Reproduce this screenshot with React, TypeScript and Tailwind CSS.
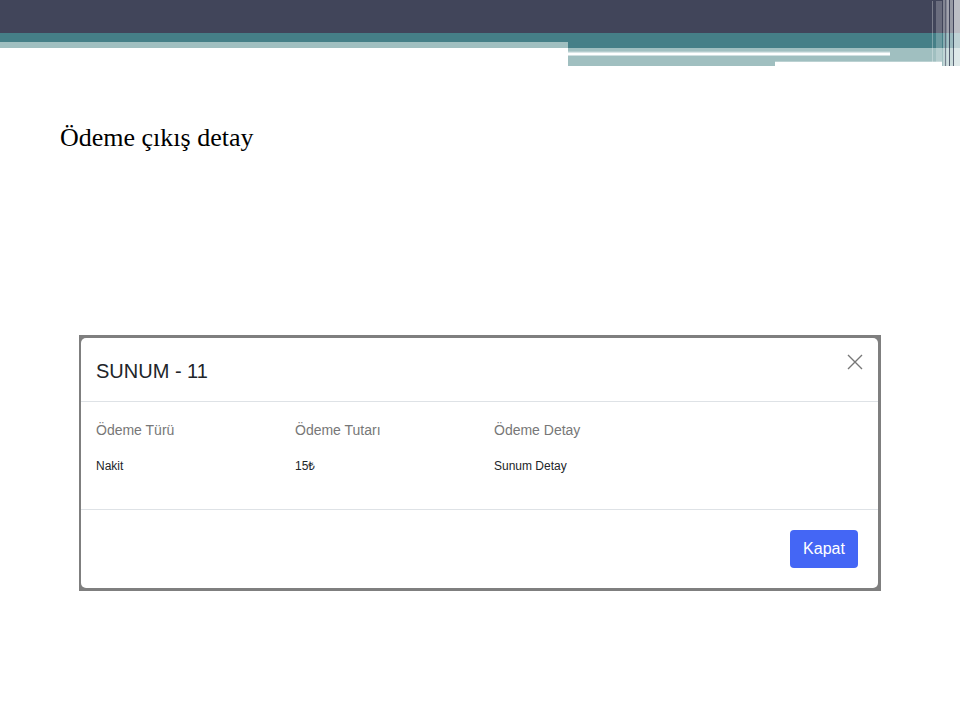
const HeaderArt = () => (
  <svg width="960" height="66" viewBox="0 0 960 66" className="block">
    <rect x="0" y="0" width="960" height="33" fill="#41455a" />
    <rect x="0" y="33" width="960" height="15" fill="#457f87" />
    <rect x="0" y="42" width="568" height="6" fill="#a0bfc0" />
    <rect x="568" y="48" width="392" height="18" fill="#a0bfc0" />
    <rect x="568" y="51.5" width="322" height="1" fill="#c8dadb" />
    <rect x="568" y="52.5" width="322" height="3" fill="#ffffff" />
    <rect x="775" y="61.5" width="167" height="1" fill="#d6e3e3" />
    <rect x="775" y="62" width="167" height="4" fill="#ffffff" />
    {/* vertical stripes */}
    <rect x="932" y="1" width="1" height="61" fill="#ffffff" opacity="0.3" />
    <rect x="936" y="1" width="6" height="65" fill="#ffffff" opacity="0.22" />
    <rect x="943" y="0" width="4" height="66" fill="#ffffff" opacity="0.35" />
    <rect x="945" y="0" width="1" height="66" fill="#41455a" opacity="0.6" />
    <rect x="947" y="0" width="2" height="66" fill="#ffffff" opacity="0.5" />
    <rect x="949" y="0" width="1" height="66" fill="#41455a" opacity="0.8" />
    <rect x="950" y="0" width="3" height="66" fill="#ffffff" opacity="0.45" />
    <rect x="953" y="0" width="1" height="66" fill="#41455a" opacity="0.7" />
    <rect x="954" y="0" width="6" height="66" fill="#ffffff" opacity="0.65" />
  </svg>
);

const CloseIcon = () => (
  <svg width="16" height="16" viewBox="0 0 16 16" className="-mt-[2px]">
    <path d="M1 1L15 15M15 1L1 15" stroke="#777777" strokeWidth="1.4" fill="none" />
  </svg>
);

const App = () => {
  return (
    <div className="w-[960px] h-[720px] bg-white overflow-hidden">
      <HeaderArt />

      <h1 className="mt-[54px] ml-[60px] text-[26px] leading-[36px] text-black font-['Liberation_Serif',serif]">
        Ödeme çıkış detay
      </h1>

      {/* MODAL */}
      <div className="mt-[179px] ml-[79px] w-[802px] bg-[#7f7f7f] pt-[3px] pl-[2px] pr-[3px] pb-[3px] font-['Liberation_Sans',Arial,sans-serif]">
        <div className="bg-white rounded-[5px]">
          <div className="flex items-start justify-between px-[15px] pt-[18px] pb-[15px] border-b border-[#dee2e6]">
            <h2 className="text-[20px] leading-[30px] text-[#212529]">SUNUM - 11</h2>
            <CloseIcon />
          </div>

          <div className="px-[15px] pt-[18px] pb-[34px] border-b border-[#dee2e6]">
            <div className="grid grid-cols-[199px_199px_1fr]">
              <p className="text-[14px] leading-[21px] text-[#777777]">Ödeme Türü</p>
              <p className="text-[14px] leading-[21px] text-[#777777]">Ödeme Tutarı</p>
              <p className="text-[14px] leading-[21px] text-[#777777]">Ödeme Detay</p>
            </div>
            <div className="grid grid-cols-[199px_199px_1fr] mt-[16px]">
              <p className="text-[12px] leading-[18px] text-[#212529]">Nakit</p>
              <p className="text-[12px] leading-[18px] text-[#212529]">15₺</p>
              <p className="text-[12px] leading-[18px] text-[#212529]">Sunum Detay</p>
            </div>
          </div>

          <div className="flex justify-end px-[20px] pt-[20px] pb-[20px]">
            <button className="h-[38px] w-[68px] rounded-[4px] bg-[#4466f5] text-white text-[16px]">
              Kapat
            </button>
          </div>
        </div>
      </div>
    </div>
  );
};

export default App;
